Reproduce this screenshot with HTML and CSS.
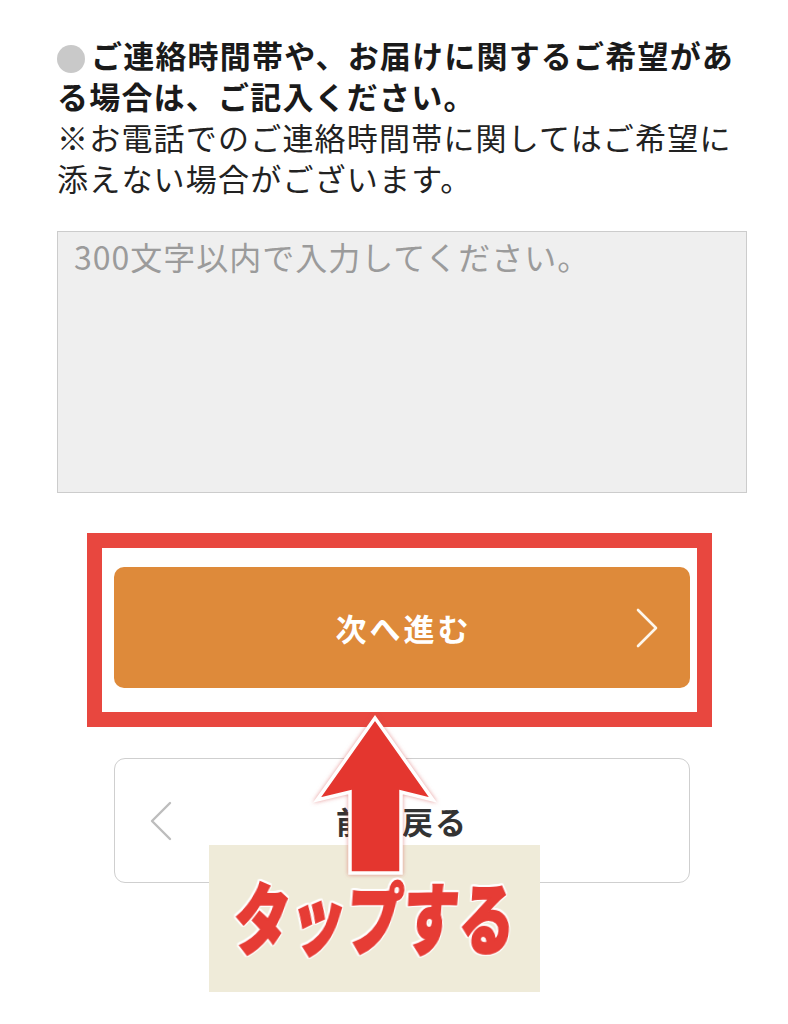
FILE: index.html
```html
<!DOCTYPE html>
<html lang="ja">
<head>
<meta charset="utf-8">
<title>ご希望の入力</title>
<link rel="stylesheet" href="styles.css">
</head>
<body>
<div class="page">
  <p class="note"><span class="lead"><span class="dot"></span>ご連絡時間帯や、お届けに関するご希望がある場合は、ご記入ください。</span><br>※お電話でのご連絡時間帯に関してはご希望に添えない場合がございます。</p>

  <textarea class="memo" placeholder="300文字以内で入力してください。"></textarea>

  <div class="actions">
    <div class="next-wrap">
      <button class="btn btn-next" type="button">
        <span class="slot"></span>
        <span class="label">次へ進む</span>
        <svg class="chev chev-right" viewBox="0 0 24 40" width="24" height="40" aria-hidden="true"><path d="M3 2 L21 20 L3 38"/></svg>
      </button>
      <div class="highlight"></div>
    </div>
    <button class="btn btn-back" type="button">
      <svg class="chev chev-left" viewBox="0 0 24 40" width="24" height="40" aria-hidden="true"><path d="M21 2 L3 20 L21 38"/></svg>
      <span class="label">前へ戻る</span>
      <span class="slot"></span>
    </button>
  </div>

  <div class="tap-label"><span class="tap-text">タップする</span></div>

  <svg class="arrow" viewBox="0 0 150 180" width="150" height="180" aria-hidden="true">
    <path d="M75 13 L133 95 L101 87 L101 168 L50 168 L50 87 L17 95 Z"/>
  </svg>
</div>
</body>
</html>
```

FILE: styles.css
```css
html, body {
  margin: 0;
  padding: 0;
  background: #ffffff;
}

body {
  font-family: "Noto Sans CJK JP", "Noto Sans", sans-serif;
  color: #222222;
}

.page {
  position: relative;
  width: 788px;
  height: 1024px;
  box-sizing: border-box;
  padding: 34px 41px 0 57px;
  overflow: hidden;
}

.note {
  margin: 0;
  font-size: 31px;
  line-height: 41px;
  letter-spacing: 1.2px;
  color: #222222;
}

.lead {
  font-weight: 700;
  color: #1a1a1a;
}

.dot {
  display: inline-block;
  width: 28px;
  height: 28px;
  border-radius: 50%;
  background: #c9c9c9;
  margin-right: 6px;
  vertical-align: -5px;
}

.memo {
  display: block;
  margin: 33px 0 0;
  width: 690px;
  height: 262px;
  box-sizing: border-box;
  padding: 4px 16px;
  background: #efefef;
  border: 1px solid #cccccc;
  border-radius: 0;
  resize: none;
  font-family: "Noto Sans CJK JP", "Noto Sans", sans-serif;
  font-size: 32px;
  line-height: 40px;
  letter-spacing: 1px;
  color: #333333;
  outline: none;
}

.memo::placeholder {
  color: #9b9b9b;
  opacity: 1;
}

.actions {
  margin-top: 74px;
  display: flex;
  flex-direction: column;
  align-items: center;
  gap: 70px;
}

.next-wrap {
  position: relative;
  width: 576px;
}

.btn {
  display: grid;
  grid-template-columns: 1fr auto 1fr;
  align-items: center;
  width: 576px;
  box-sizing: border-box;
  margin: 0;
  font-family: "Noto Sans CJK JP", "Noto Sans", sans-serif;
  cursor: pointer;
}

.btn .label {
  white-space: nowrap;
}

.btn-next {
  height: 121px;
  padding: 0 31px 0 34px;
  background: #de8a3a;
  border: none;
  border-radius: 10px;
  color: #ffffff;
  font-size: 31px;
  font-weight: 700;
  letter-spacing: 3px;
}

.btn-back {
  height: 125px;
  padding: 0 34px;
  background: #ffffff;
  border: 1.5px solid #cfcfcf;
  border-radius: 11px;
  color: #333333;
  font-size: 31px;
  font-weight: 700;
  letter-spacing: 2px;
}

.chev {
  display: block;
  fill: none;
  stroke-linecap: round;
  stroke-linejoin: round;
}

.chev-right {
  justify-self: end;
  stroke: #fdf6ec;
  stroke-width: 2.6;
}

.chev-left {
  justify-self: start;
  stroke: #bdbdbd;
  stroke-width: 2.4;
}

/* annotation overlays */
.highlight {
  position: absolute;
  top: -34px;
  left: -27px;
  right: -22px;
  bottom: -39px;
  border: 15px solid #e8473f;
  pointer-events: none;
}

.tap-label {
  position: absolute;
  left: 209px;
  top: 845px;
  width: 331px;
  height: 147px;
  background: #efebd9;
  display: flex;
  align-items: center;
  justify-content: center;
}

.tap-text {
  display: inline-block;
  margin-top: -8px;
  font-size: 78px;
  line-height: 1;
  font-weight: 900;
  color: #e63c35;
  -webkit-text-stroke: 2px #e63c35;
  white-space: nowrap;
  transform: scaleX(0.72) skewX(-6deg);
  filter: drop-shadow(1.5px 0 0 #ffffff) drop-shadow(-1.5px 0 0 #ffffff) drop-shadow(0 1.5px 0 #ffffff) drop-shadow(0 -1.5px 0 #ffffff);
}

.arrow {
  position: absolute;
  left: 300px;
  top: 705px;
  overflow: visible;
  filter: drop-shadow(0 0 2px rgba(210, 70, 70, 0.55));
}

.arrow path {
  fill: #e4362f;
  stroke: #ffffff;
  stroke-width: 3.5;
  stroke-linejoin: miter;
}
```
